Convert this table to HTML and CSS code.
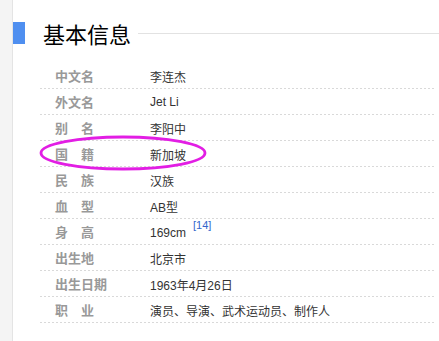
FILE: index.html
```html
<!DOCTYPE html>
<html lang="zh">
<head>
<meta charset="utf-8">
<link rel="stylesheet" href="styles.css">
</head>
<body>
<div class="page">
  <div class="side"></div>
  <div class="main">
    <div class="heading">
      <span class="bar"></span>
      <h2 class="title">基本信息</h2>
      <span class="rule"></span>
    </div>
    <dl class="info">
      <div class="row"><dt>中文名</dt><dd>李连杰</dd></div>
      <div class="row"><dt>外文名</dt><dd>Jet Li</dd></div>
      <div class="row"><dt class="two">别名</dt><dd>李阳中</dd></div>
      <div class="row"><dt class="two">国籍</dt><dd>新加坡</dd></div>
      <div class="row"><dt class="two">民族</dt><dd>汉族</dd></div>
      <div class="row"><dt class="two">血型</dt><dd>AB型</dd></div>
      <div class="row"><dt class="two">身高</dt><dd>169cm<sup class="ref">[14]</sup></dd></div>
      <div class="row"><dt>出生地</dt><dd>北京市</dd></div>
      <div class="row"><dt>出生日期</dt><dd>1963年4月26日</dd></div>
      <div class="row"><dt class="two">职业</dt><dd>演员、导演、武术运动员、制作人</dd></div>
    </dl>
  </div>
  <svg class="mark" width="172" height="40" viewBox="0 0 172 40">
    <ellipse cx="85" cy="19" rx="82" ry="16" fill="none" stroke="#e21ee4" stroke-width="2.8"/>
  </svg>
</div>
</body>
</html>
```
FILE: styles.css
```css
html, body {
  margin: 0;
  padding: 0;
  background: #fff;
}
body {
  font-family: "Liberation Sans", "Noto Sans CJK SC", sans-serif;
  width: 439px;
  height: 341px;
  overflow: hidden;
}
.page {
  position: relative;
  display: flex;
  height: 341px;
}
.side {
  width: 12px;
  flex: none;
  background: #f4f4f4;
  border-right: 1px solid #e4e4e4;
}
.main {
  flex: 1;
  min-width: 0;
}
.heading {
  display: flex;
  align-items: center;
  margin-top: 22px;
  height: 22px;
}
.bar {
  width: 12px;
  height: 22px;
  background: #4f8ff0;
  flex: none;
}
.title {
  margin: 0 0 0 18px;
  font-size: 22px;
  font-weight: normal;
  line-height: 22px;
  color: #000;
  font-family: "Noto Sans CJK SC", sans-serif;
}
.rule {
  flex: 1;
  margin-left: 7px;
  height: 0;
  border-top: 1px solid #e2e2e2;
}
.info {
  margin: 19px 3px 0 27px;
  padding: 0;
}
.row {
  display: flex;
  align-items: center;
  height: 25px;
  padding-bottom: 1px;
  background-image: linear-gradient(to right, #d9d9d9 50%, rgba(255,255,255,0) 50%);
  background-size: 4px 1px;
  background-repeat: repeat-x;
  background-position: left bottom;
  font-size: 13px;
}
.row dt {
  width: 95px;
  padding-left: 15px;
  flex: none;
  color: #999;
  font-weight: bold;
  font-family: "Noto Sans CJK SC", sans-serif;
}
.row dt.two {
  letter-spacing: 13px;
}
.row dd {
  margin: 0;
  padding-top: 1px;
  color: #333;
  font-size: 12px;
}
.ref {
  color: #3366cc;
  font-size: 11px;
  margin-left: 7px;
  vertical-align: 8px;
  line-height: 0;
}
.mark {
  position: absolute;
  left: 38px;
  top: 134px;
}
```
